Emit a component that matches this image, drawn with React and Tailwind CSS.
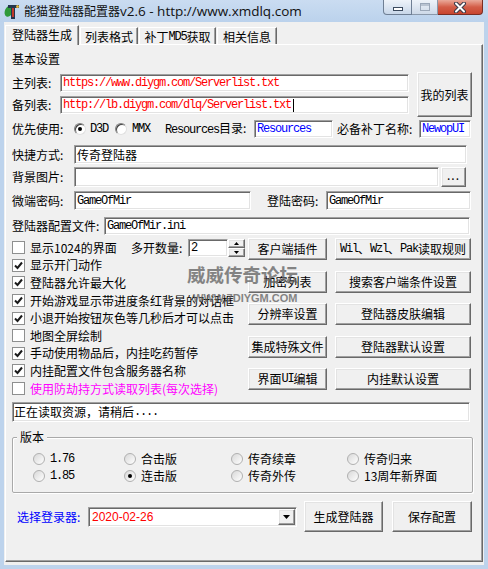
import React from "react";

const F = "font-['Noto_Sans_CJK_SC',sans-serif]";
const M = "font-['Liberation_Mono','Noto_Sans_CJK_SC',monospace] text-[12px] tracking-[-1.2px]";

const sunken =
  "bg-white border border-t-[#a0a0a0] border-l-[#a0a0a0] border-r-white border-b-white shadow-[inset_1px_1px_0_#696969,inset_-1px_-1px_0_#e3e3e3]";
const raised =
  "bg-[#f0f0f0] border border-t-white border-l-white border-r-[#696969] border-b-[#696969] shadow-[inset_-1px_-1px_0_#a0a0a0,inset_1px_1px_0_#e3e3e3]";

function Box({ className = "", children }) {
  return (
    <div className={`${sunken} flex items-center pl-[2px] overflow-hidden whitespace-nowrap ${className}`}>
      {children}
    </div>
  );
}

function Btn({ className = "", children }) {
  return (
    <div className={`${raised} flex items-center justify-center whitespace-nowrap leading-[14px] ${className}`}>
      {children}
    </div>
  );
}

function Check({ checked }) {
  return (
    <span className="w-[13px] h-[13px] shrink-0 bg-white border border-[#8e8f8f] flex items-center justify-center">
      {checked && (
        <svg width="11" height="11" viewBox="0 0 11 11">
          <polyline points="2,5.5 4.5,8 9,2.5" fill="none" stroke="#1a1a1a" strokeWidth="2" />
        </svg>
      )}
    </span>
  );
}

function Radio({ checked, light }) {
  return (
    <span
      className={`w-[12px] h-[12px] shrink-0 rounded-full flex items-center justify-center border ${
        light
          ? "border-[#b0b0b0] bg-gradient-to-br from-[#d8d8d8] to-white"
          : "border-t-[#808080] border-l-[#808080] border-r-[#e0e0e0] border-b-[#e0e0e0] bg-white shadow-[inset_1px_1px_0_#404040]"
      }`}
    >
      {checked && <span className="w-[4px] h-[4px] rounded-full bg-black" />}
    </span>
  );
}

function CheckRow({ checked, children, className = "" }) {
  return (
    <div className="h-[17.6px] flex items-center">
      <Check checked={checked} />
      <span className={`ml-[5px] leading-[14px] whitespace-nowrap ${className}`}>{children}</span>
    </div>
  );
}

function GRadio({ checked, children, mono }) {
  return (
    <div className="flex items-center">
      <Radio checked={checked} light />
      <span className={`ml-[5px] leading-[14px] whitespace-nowrap ${mono ? M : ""}`}>{children}</span>
    </div>
  );
}

function AppIcon() {
  return (
    <svg width="17" height="18" viewBox="0 0 17 18">
      <ellipse cx="5" cy="9" rx="4" ry="6" fill="#2f9a3a" transform="rotate(25 5 9)" />
      <path d="M4 3 H15 V6 H11 V17 H7 V6 H4 Z" fill="#23364e" />
      <path d="M8 6 H10 V15 H8 Z" fill="#c0392b" />
      <circle cx="13.5" cy="4.5" r="1.5" fill="#e3b63c" />
    </svg>
  );
}

function Tab({ selected, className = "", children }) {
  return (
    <div
      className={`${className} flex justify-center pt-[2px] leading-[14px] whitespace-nowrap bg-[#f0f0f0] border-t border-l border-r border-t-white border-l-white border-r-[#696969] shadow-[inset_-1px_0_0_#a0a0a0] ${
        selected ? "h-[20px] self-start relative z-10" : "h-[17px] self-start mt-[2px]"
      }`}
    >
      {children}
    </div>
  );
}

export default function App() {
  return (
    <div className={`w-[488px] h-[569px] bg-[#bdd3ec] flex flex-col overflow-hidden text-[12px] text-black ${F}`}>
      {/* title bar */}
      <div className="h-[22px] shrink-0 flex items-start bg-gradient-to-b from-[#cadcf1] to-[#bbd2ec]">
        <div className="w-[24px] h-[22px] flex items-center justify-center pl-[1px]">
          <AppIcon />
        </div>
        <div className="leading-[21px] text-[12px] text-[#111] whitespace-nowrap">
          能猫登陆器配置器<span className="text-[13.5px] font-['Open_Sans',sans-serif]">v2.6 - http://www.xmdlq.com</span>
        </div>
        <div className="ml-auto mr-[5px] flex h-[15px]">
          <div className="w-[29px] h-[15px] border border-t-0 border-[#6f7f94] rounded-bl-[4px] bg-gradient-to-b from-[#eef3f9] to-[#c8d7e9] flex items-end justify-center pb-[3px]">
            <span className="w-[10px] h-[4px] bg-white border border-[#3b4a5e]" />
          </div>
          <div className="w-[26px] h-[15px] border border-t-0 border-l-0 border-[#8a98aa] bg-gradient-to-b from-[#eef3f9] to-[#cdd9e8] flex items-center justify-center">
            <span className="w-[10px] h-[8px] border border-[#9aa7b8] shadow-[inset_0_2px_0_#b8c3d1]" />
          </div>
          <div className="w-[45px] h-[15px] border border-t-0 border-l-0 border-[#7a2e24] rounded-br-[4px] bg-gradient-to-b from-[#e9a99a] via-[#d35d48] to-[#c8452f] flex items-center justify-center">
            <svg width="14" height="11" viewBox="0 0 14 11">
              <path d="M3 1.5 L11 9.5 M11 1.5 L3 9.5" stroke="#3a3a48" strokeWidth="4" strokeLinecap="round" />
              <path d="M3 1.5 L11 9.5 M11 1.5 L3 9.5" stroke="#ffffff" strokeWidth="2" strokeLinecap="round" />
            </svg>
          </div>
        </div>
      </div>

      {/* body */}
      <div className="flex-1 mx-[4px] mb-[4px] bg-[#f0f0f0] px-[1px] pt-[3px] pb-[3px] flex flex-col">
        {/* tabs */}
        <div className="h-[20px] shrink-0 flex">
          <Tab selected className="w-[74px]">登陆器生成</Tab>
          <Tab className="w-[58px] ml-[1px]">列表格式</Tab>
          <Tab className="w-[77px] ml-[1px]">
            补丁<span className={M}>MD5</span>获取
          </Tab>
          <Tab className="w-[60px] ml-[1px]">相关信息</Tab>
        </div>

        {/* panel */}
        <div className="flex-1 -mt-[1px] relative border border-t-white border-l-white border-r-[#696969] border-b-[#696969] shadow-[inset_-1px_-1px_0_#a0a0a0] px-[6px] flex flex-col">
          <div className="mt-[7px] h-[14px] leading-[14px]">基本设置</div>

          {/* list block */}
          <div className="mt-[6px] h-[45px] flex">
            <div className="flex flex-col pt-[2px] gap-[4px]">
              <div className="h-[18px] flex items-center">
                <span className="w-[48px] leading-[14px]">主列表:</span>
                <Box className="w-[349px] h-[18px]">
                  <span className={`${M} text-[#ff0000]`}>https://www.diygm.com/Serverlist.txt</span>
                </Box>
              </div>
              <div className="h-[18px] flex items-center">
                <span className="w-[48px] leading-[14px]">备列表:</span>
                <Box className="w-[349px] h-[18px]">
                  <span className={`${M} text-[#ff0000]`}>http://lb.diygm.com/dlq/Serverlist.txt</span>
                  <span className="w-[1px] h-[13px] bg-black ml-[2px]" />
                </Box>
              </div>
            </div>
            <Btn className="ml-[8px] w-[55px] h-[45px]">我的列表</Btn>
          </div>

          {/* priority row */}
          <div className="mt-[3px] h-[18px] flex items-center">
            <span className="w-[62px] leading-[14px]">优先使用:</span>
            <Radio checked />
            <span className={`${M} ml-[4px]`}>D3D</span>
            <span className="ml-[7px]">
              <Radio />
            </span>
            <span className={`${M} ml-[5px]`}>MMX</span>
            <span className="ml-[15px] w-[89px] leading-[14px] whitespace-nowrap">
              <span className={M}>Resources</span>目录:
            </span>
            <Box className="w-[79px] h-[18px]">
              <span className={`${M} text-[#0000ff]`}>Resources</span>
            </Box>
            <span className="ml-[4px] w-[82px] leading-[14px] whitespace-nowrap">必备补丁名称:</span>
            <Box className="w-[52px] h-[18px]">
              <span className={`${M} text-[#0000ff]`}>NewopUI</span>
            </Box>
          </div>

          {/* shortcut */}
          <div className="mt-[7px] h-[19px] flex items-center">
            <span className="w-[62px] leading-[14px]">快捷方式:</span>
            <Box className="w-[393px] h-[19px]">
              <span className="leading-[14px]">传奇登陆器</span>
            </Box>
          </div>

          {/* background */}
          <div className="mt-[3px] h-[20px] flex items-center">
            <span className="w-[62px] leading-[14px]">背景图片:</span>
            <Box className="w-[365px] h-[20px]" />
            <Btn className="ml-[2px] w-[25px] h-[20px]">
              <span className="leading-[10px] pb-[4px] tracking-[1px]">...</span>
            </Btn>
          </div>

          {/* passwords */}
          <div className="mt-[4px] h-[19px] flex items-center">
            <span className="w-[62px] leading-[14px]">微端密码:</span>
            <Box className="w-[177px] h-[19px]">
              <span className={M}>GameOfMir</span>
            </Box>
            <span className="ml-[16px] w-[59px] leading-[14px]">登陆密码:</span>
            <Box className="w-[145px] h-[19px]">
              <span className={M}>GameOfMir</span>
            </Box>
          </div>

          {/* config file */}
          <div className="mt-[7px] h-[18px] flex items-center">
            <span className="w-[92px] leading-[14px] whitespace-nowrap">登陆器配置文件:</span>
            <Box className="w-[366px] h-[18px]">
              <span className={M}>GameOfMir.ini</span>
            </Box>
          </div>

          {/* lower region */}
          <div className="mt-[3px] h-[160px] flex">
            <div className="w-[236px] flex flex-col pt-[1px]">
              <div className="h-[17.6px] flex items-center">
                <div className="w-[119px] flex items-center">
                  <Check />
                  <span className="ml-[5px] leading-[14px] whitespace-nowrap">显示1024的界面</span>
                </div>
                <span className="w-[57px] leading-[14px] whitespace-nowrap">多开数量:</span>
                <Box className="w-[40px] h-[18px]">
                  <span className={M}>2</span>
                </Box>
                <div className="w-[17px] h-[18px] flex flex-col">
                  <div className={`${raised} h-[9px] flex items-center justify-center`}>
                    <svg width="5" height="3" viewBox="0 0 5 3">
                      <path d="M0 3 L2.5 0 L5 3 Z" fill="#000" />
                    </svg>
                  </div>
                  <div className={`${raised} h-[9px] flex items-center justify-center`}>
                    <svg width="5" height="3" viewBox="0 0 5 3">
                      <path d="M0 0 L2.5 3 L5 0 Z" fill="#000" />
                    </svg>
                  </div>
                </div>
              </div>
              <CheckRow checked>显示开门动作</CheckRow>
              <CheckRow checked>登陆器允许最大化</CheckRow>
              <CheckRow checked>开始游戏显示带进度条红背景的对话框</CheckRow>
              <CheckRow checked>小退开始按钮灰色等几秒后才可以点击</CheckRow>
              <CheckRow>地图全屏绘制</CheckRow>
              <CheckRow checked>手动使用物品后，内挂吃药暂停</CheckRow>
              <CheckRow checked>内挂配置文件包含服务器名称</CheckRow>
              <CheckRow className="text-[#ff00ff]">使用防劫持方式读取列表(每次选择)</CheckRow>
            </div>
            <div className="grid grid-cols-[79px_136px] gap-x-[8px] gap-y-[10.5px] auto-rows-[22px] content-start">
              <Btn>客户端插件</Btn>
              <Btn>
                <span className={M}>Wil</span>、<span className={M}>Wzl</span>、<span className={M}>Pak</span>读取规则
              </Btn>
              <Btn>加密列表</Btn>
              <Btn>搜索客户端条件设置</Btn>
              <Btn>分辨率设置</Btn>
              <Btn>登陆器皮肤编辑</Btn>
              <Btn>集成特殊文件</Btn>
              <Btn>登陆器默认设置</Btn>
              <Btn>
                界面<span className={M}>UI</span>编辑
              </Btn>
              <Btn>内挂默认设置</Btn>
            </div>
          </div>

          {/* status */}
          <Box className="mt-[4px] w-[458px] h-[20px] !pl-[1px]">
            <span className="leading-[14px]">正在读取资源，请稍后</span>
            <span className={M}>....</span>
          </Box>

          {/* version group */}
          <div className="mt-[15px] w-[461px] h-[56px] relative border border-[#a9a9a9] shadow-[inset_1px_1px_0_#ffffff,1px_1px_0_#ffffff] rounded-[2px]">
            <span className="absolute left-[4px] -top-[8px] px-[3px] bg-[#f0f0f0] leading-[14px]">版本</span>
            <div className="grid grid-cols-[91px_107px_116px_1fr] auto-rows-[17px] pl-[20px] pt-[12px]">
              <GRadio mono>1.76</GRadio>
              <GRadio>合击版</GRadio>
              <GRadio>传奇续章</GRadio>
              <GRadio>传奇归来</GRadio>
              <GRadio mono>1.85</GRadio>
              <GRadio checked>连击版</GRadio>
              <GRadio>传奇外传</GRadio>
              <GRadio>13周年新界面</GRadio>
            </div>
          </div>

          {/* bottom row */}
          <div className="mt-[8px] h-[31px] flex items-center">
            <span className="pl-[5px] w-[76px] leading-[14px] text-[#0000ff] whitespace-nowrap">选择登录器:</span>
            <div className={`${sunken} w-[209px] h-[20px] flex items-center justify-between pl-[3px] pr-[1px]`}>
              <span className="font-['Liberation_Sans',sans-serif] text-[12px] text-[#ff0000] leading-[14px]">2020-02-26</span>
              <div className={`${raised} w-[17px] h-[16px] flex items-center justify-center`}>
                <svg width="7" height="4" viewBox="0 0 7 4">
                  <path d="M0 0 L7 0 L3.5 4 Z" fill="#000" />
                </svg>
              </div>
            </div>
            <Btn className="ml-[7px] w-[79px] h-[31px]">生成登陆器</Btn>
            <Btn className="ml-[9px] w-[80px] h-[31px]">保存配置</Btn>
          </div>

          {/* watermark */}
          <div className="absolute left-[181px] top-[218px] z-20 pointer-events-none flex flex-col opacity-75">
            <span className="text-[18.5px] leading-[22px] font-bold text-[#5f5f5f] whitespace-nowrap">威威传奇论坛</span>
            <span className="mt-[7px] ml-[6px] text-[11px] leading-[12px] font-bold text-[#5f5f5f] font-['Liberation_Sans',sans-serif] whitespace-nowrap">
              WWW.7DIYGM.COM
            </span>
          </div>
        </div>
      </div>
    </div>
  );
}
